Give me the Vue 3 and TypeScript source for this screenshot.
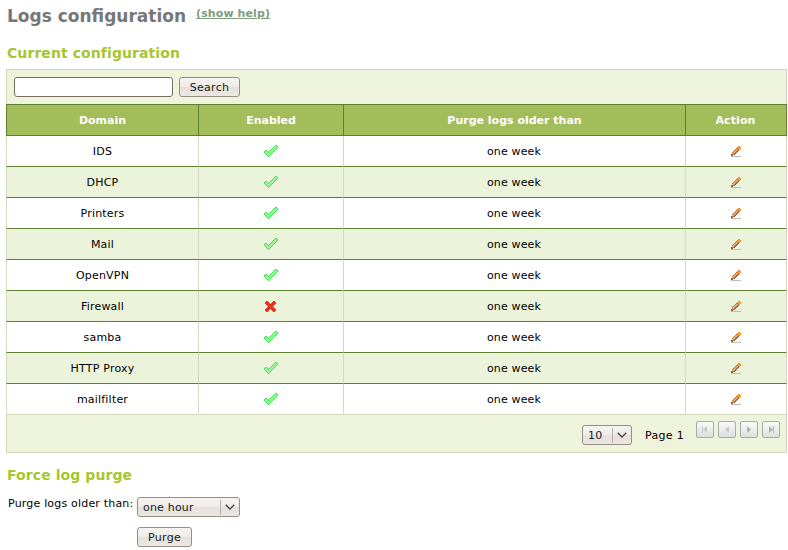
<script setup lang="ts">
import { ref } from 'vue'

interface LogDomain {
  name: string
  enabled: boolean
  purge: string
}

const rows: LogDomain[] = [
  { name: 'IDS', enabled: true, purge: 'one week' },
  { name: 'DHCP', enabled: true, purge: 'one week' },
  { name: 'Printers', enabled: true, purge: 'one week' },
  { name: 'Mail', enabled: true, purge: 'one week' },
  { name: 'OpenVPN', enabled: true, purge: 'one week' },
  { name: 'Firewall', enabled: false, purge: 'one week' },
  { name: 'samba', enabled: true, purge: 'one week' },
  { name: 'HTTP Proxy', enabled: true, purge: 'one week' },
  { name: 'mailfilter', enabled: true, purge: 'one week' },
]
const pagers: string[] = [
  'M5 4h1v7H5zM10 4v7L6 7.5z',
  'M10 4v7L6 7.5z',
  'M6 4v7l4-3.5z',
  'M6 4v7l4-3.5zM10 4h1v7h-1z',
]
const query = ref('')
</script>

<template>
  <main class="page">
    <header class="title">
      <h1>Logs configuration</h1>
      <a class="help">(show help)</a>
    </header>
    <h2>Current configuration</h2>
    <section class="panel">
      <div class="search">
        <input v-model="query" type="text" />
        <button class="btn search-btn">Search</button>
      </div>
      <div class="row head">
        <div>Domain</div>
        <div>Enabled</div>
        <div>Purge logs older than</div>
        <div>Action</div>
      </div>
      <div v-for="r in rows" :key="r.name" class="row">
        <div class="name">{{ r.name }}</div>
        <div>
          <svg v-if="r.enabled" width="14" height="12" viewBox="0 0 14 12" shape-rendering="crispEdges">
            <path d="M11 0h2v1h1v2h-1v1h-1v1h-1v1h-1v1H9v1H8v1H7v1H6v1H5v1H4v-1H3v-1H2V9H1V8H0V6h1V5h2v1h1v1h1V6h1V5h1V4h1V3h1V2h1V1h1z" fill="#98f698" />
            <path d="M11 0h2v1h-2zM10 1h1v1h-1zM9 2h1v1H9zM8 3h1v1H8zM7 4h1v1H7zM6 5h1v1H6zM5 6h1v1H5zM4 7h1v1H4zM3 6h1v1H3zM1 5h2v1H1zM0 6h1v2H0zM1 8h1v1H1zM2 9h1v1H2zM3 10h1v1H3zM4 11h1v1H4zM5 10h1v1H5zM6 9h1v1H6zM7 8h1v1H7zM8 7h1v1H8zM9 6h1v1H9zM10 5h1v1h-1zM11 4h1v1h-1zM12 3h1v1h-1zM13 1h1v2h-1z" fill="#3de84e" />
          </svg>
          <svg v-else class="cross" width="11" height="11" viewBox="0 0 11 11" shape-rendering="crispEdges">
            <path d="M1 0h2v1h1v1h1v1h1V2h1V1h1V0h2v1h1v2h-1v1H9v1H8v1h1v1h1v1h1v2h-1v1H8v-1H7V9H6V8H5v1H4v1H3v1H1v-1H0V8h1V7h1V6h1V5H2V4H1V3H0V1h1z" fill="#e6331e" />
          </svg>
        </div>
        <div class="text">{{ r.purge }}</div>
        <div>
          <svg class="pencil" width="10" height="11" viewBox="0 0 10 11" shape-rendering="crispEdges">
            <path d="M0 10h10v1H0z" fill="#bdbdbd" />
            <path d="M5 2h4v2H8v1H7v1H6v1H5v1H4v1H2v1H0V8h1V6h1V5h1V4h1V3h1z" fill="#b87c4c" />
            <path d="M5 3h2v1H5zM4 4h2v1H4zM3 5h2v1H3zM2 6h2v1H2zM1 7h2v1H1z" fill="#dfab7c" />
            <path d="M0 9h2v1H0zM0 8h1v1H0zM3 8h1v1H3zM4 7h1v1H4zM5 6h1v1H5zM6 5h1v1H6zM7 4h1v1H7z" fill="#8a5a34" />
            <path d="M7 0h2v1h1v2H9v1H8V3H7V2H6V1h1z" fill="#ff8c16" />
            <path d="M7 1h1v1h1v1H8V2H7z" fill="#ffb04c" />
          </svg>
        </div>
      </div>
      <footer class="foot">
        <div class="select size">
          <span>10</span>
          <i><svg width="10" height="6" viewBox="0 0 10 6"><path d="M.7.8 5 5 9.3.8" /></svg></i>
        </div>
        <span class="page-no">Page 1</span>
        <div class="pager">
          <button v-for="(p, i) in pagers" :key="i">
            <svg width="16" height="15" viewBox="0 0 16 15"><path :d="p" :class="{ later: i > 1 }" /></svg>
          </button>
        </div>
      </footer>
    </section>
    <h2 class="force">Force log purge</h2>
    <div class="purge">
      <label>Purge logs older than:</label>
      <div class="controls">
        <div class="select hour">
          <span>one hour</span>
          <i><svg width="10" height="6" viewBox="0 0 10 6"><path d="M.7.8 5 5 9.3.8" /></svg></i>
        </div>
        <button class="btn purge-btn">Purge</button>
      </div>
    </div>
  </main>
</template>

<style>
body {
  margin: 0;
  background: #fff;
}
</style>

<style scoped>
* {
  box-sizing: border-box;
}
.page {
  width: 788px;
  height: 550px;
  padding: 6px 1px 0 6px;
  overflow: hidden;
  font: 11px/15px 'DejaVu Sans', sans-serif;
  color: #000;
}
.title {
  display: flex;
  height: 38px;
  padding-left: 1px;
}
h1 {
  margin: 0;
  font-size: 17px;
  line-height: 20px;
  color: #777;
}
.help {
  margin-left: 10px;
  font-weight: bold;
  letter-spacing: 0.1px;
  text-decoration: underline;
  color: #7e9c7e;
}
h2 {
  margin: 0;
  height: 25px;
  padding-left: 1px;
  font-size: 14px;
  line-height: 18px;
  letter-spacing: 0.08px;
  color: #a6c630;
}
.panel {
  width: 781px;
}
.search {
  display: flex;
  height: 35px;
  padding: 7px 7px 0;
  gap: 6px;
  border: 1px solid #d3d8bb;
  border-bottom: 0;
  background: #eef3dc;
}
input {
  width: 159px;
  height: 20px;
  margin: 0;
  padding: 1px 4px;
  border: 1px solid #7b6b65;
  border-radius: 3px;
  background: #fff;
  font: inherit;
  outline: 0;
}
.btn {
  height: 20px;
  padding: 1px 0 0;
  border: 1px solid #968e85;
  border-radius: 3px;
  background: linear-gradient(#f6f4f2, #efebe8 50%, #e6e0db 51%, #ece7e3);
  font: 11px/17px 'DejaVu Sans', sans-serif;
  letter-spacing: 0.3px;
  color: #1a1a1a;
}
.search-btn {
  width: 61px;
}
.row {
  display: grid;
  grid-template-columns: 192px 145px 342px 102px;
  height: 31px;
}
.row > div {
  display: flex;
  align-items: center;
  justify-content: center;
  border-left: 1px solid #d6d8c0;
  border-bottom: 1px solid #5f8033;
}
.row > .text {
  padding-right: 1px;
  letter-spacing: 0.15px;
}
.row > .name {
  letter-spacing: 0.2px;
}
.row > div:last-child {
  border-right: 1px solid #d6d8c0;
}
.row:nth-child(even) > div {
  background: #a4bd5b;
}
.row:nth-child(n + 3) > div {
  background: #fff;
}
.row:nth-child(n + 3):nth-child(even) > div {
  background: #ebf4da;
}
.row:nth-child(11) > div {
  border-bottom-color: #d3d8bb;
}
.head {
  height: 32px;
  font-weight: bold;
  color: #fff;
}
.head > div,
.head > div:last-child {
  border-color: #5f8033;
  border-top: 1px solid #5f8033;
}
.head > div:last-child {
  padding-right: 1px;
  letter-spacing: 0.1px;
}
.cross {
  margin: 1px 1px 0 0;
}
.pencil {
  margin-top: 1px;
}
.foot {
  display: flex;
  justify-content: flex-end;
  height: 38px;
  padding: 0 6px 0 0;
  border: 1px solid #d3d8bb;
  border-top: 0;
  background: #eef3dc;
}
.select {
  display: flex;
  height: 20px;
  border: 1px solid #968e85;
  border-radius: 3px;
  background: linear-gradient(#f6f4f2, #efebe8 50%, #e6e0db 51%, #ece7e3);
  padding-left: 5px;
  line-height: 20px;
  letter-spacing: 0.2px;
  color: #1a1a1a;
}
.select span {
  flex: 1;
}
.select i {
  display: flex;
  width: 19px;
  height: 15px;
  margin-top: 2px;
  padding: 4px 0 0 4px;
  border-left: 1px solid #b5aea8;
}
.select path {
  fill: none;
  stroke: #444;
  stroke-width: 1.3;
}
.size {
  width: 50px;
  margin-top: 10px;
}
.page-no {
  width: 39px;
  margin: 13px 12px 0 13px;
  white-space: nowrap;
  letter-spacing: 0.3px;
}
.pager {
  display: flex;
  gap: 4px;
  margin-top: 6px;
}
.pager button {
  display: flex;
  width: 18px;
  height: 17px;
  padding: 0;
  border: 1px solid #aaa;
  border-radius: 2px;
  background: linear-gradient(#fafafa, #dedede);
}
.pager path {
  fill: #c9c9c9;
}
.pager .later {
  fill: #b2b2b2;
}
.force {
  margin-top: 13px;
  height: 31px;
}
.purge {
  display: flex;
  padding-left: 2px;
}
.purge label {
  width: 129px;
  margin-top: -1px;
  white-space: nowrap;
  letter-spacing: 0.19px;
}
.controls {
  display: flex;
  flex-direction: column;
  gap: 10px;
}
.hour {
  width: 103px;
}
.purge-btn {
  width: 55px;
}
</style>
